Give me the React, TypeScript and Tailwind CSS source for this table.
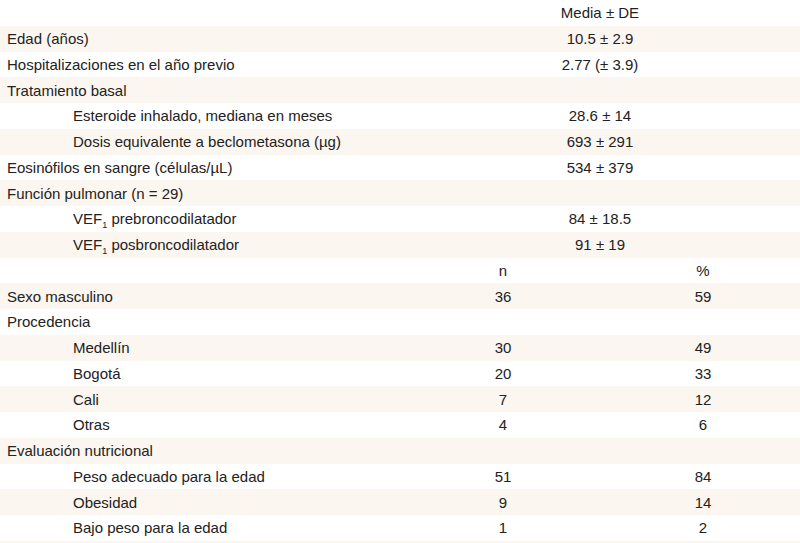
import React from "react";

type Row =
  | { kind: "head2"; value: string }
  | { kind: "mean"; label: React.ReactNode; value?: string; indent?: boolean }
  | { kind: "head3"; a: string; b: string }
  | { kind: "np"; label: string; n?: string; p?: string; indent?: boolean };

const vef = (rest: string) => (
  <>
    VEF<span className="relative top-[4px] text-[9px] leading-none">1</span> {rest}
  </>
);

const rows: Row[] = [
  { kind: "head2", value: "Media ± DE" },
  { kind: "mean", label: "Edad (años)", value: "10.5 ± 2.9" },
  { kind: "mean", label: "Hospitalizaciones en el año previo", value: "2.77 (± 3.9)" },
  { kind: "mean", label: "Tratamiento basal" },
  { kind: "mean", label: "Esteroide inhalado, mediana en meses", value: "28.6 ± 14", indent: true },
  { kind: "mean", label: "Dosis equivalente a beclometasona (µg)", value: "693 ± 291", indent: true },
  { kind: "mean", label: "Eosinófilos en sangre (células/µL)", value: "534 ± 379" },
  { kind: "mean", label: "Función pulmonar (n = 29)" },
  { kind: "mean", label: vef("prebroncodilatador"), value: "84 ± 18.5", indent: true },
  { kind: "mean", label: vef("posbroncodilatador"), value: "91 ± 19", indent: true },
  { kind: "head3", a: "n", b: "%" },
  { kind: "np", label: "Sexo masculino", n: "36", p: "59" },
  { kind: "np", label: "Procedencia" },
  { kind: "np", label: "Medellín", n: "30", p: "49", indent: true },
  { kind: "np", label: "Bogotá", n: "20", p: "33", indent: true },
  { kind: "np", label: "Cali", n: "7", p: "12", indent: true },
  { kind: "np", label: "Otras", n: "4", p: "6", indent: true },
  { kind: "np", label: "Evaluación nutricional" },
  { kind: "np", label: "Peso adecuado para la edad", n: "51", p: "84", indent: true },
  { kind: "np", label: "Obesidad", n: "9", p: "14", indent: true },
  { kind: "np", label: "Bajo peso para la edad", n: "1", p: "2", indent: true },
];

export default function App() {
  return (
    <div
      className="w-[800px] h-[543px] overflow-hidden bg-white text-[#222222] text-[15px]"
      style={{ fontFamily: '"Liberation Sans", Arial, sans-serif' }}
    >
      {rows.map((r, i) => {
        const bg = i % 2 === 1 ? "bg-[#fcf6f0]" : "bg-white";
        const labelCls = `w-[400px] whitespace-nowrap ${"indent" in r && r.indent ? "pl-[73px]" : "pl-[7px]"}`;
        return (
          <div key={i} className={`flex items-center h-[25.75px] leading-[17px] ${bg}`}>
            {r.kind === "head2" && (
              <>
                <div className={labelCls}></div>
                <div className="flex-1 text-center">{r.value}</div>
              </>
            )}
            {r.kind === "mean" && (
              <>
                <div className={labelCls}>{r.label}</div>
                <div className="flex-1 text-center">{r.value}</div>
              </>
            )}
            {r.kind === "head3" && (
              <>
                <div className={labelCls}></div>
                <div className="w-[206px] text-center">{r.a}</div>
                <div className="flex-1 text-center">{r.b}</div>
              </>
            )}
            {r.kind === "np" && (
              <>
                <div className={labelCls}>{r.label}</div>
                <div className="w-[206px] text-center">{r.n}</div>
                <div className="flex-1 text-center">{r.p}</div>
              </>
            )}
          </div>
        );
      })}
      <div className="h-[25.75px] bg-[#fcf6f0]"></div>
    </div>
  );
}
